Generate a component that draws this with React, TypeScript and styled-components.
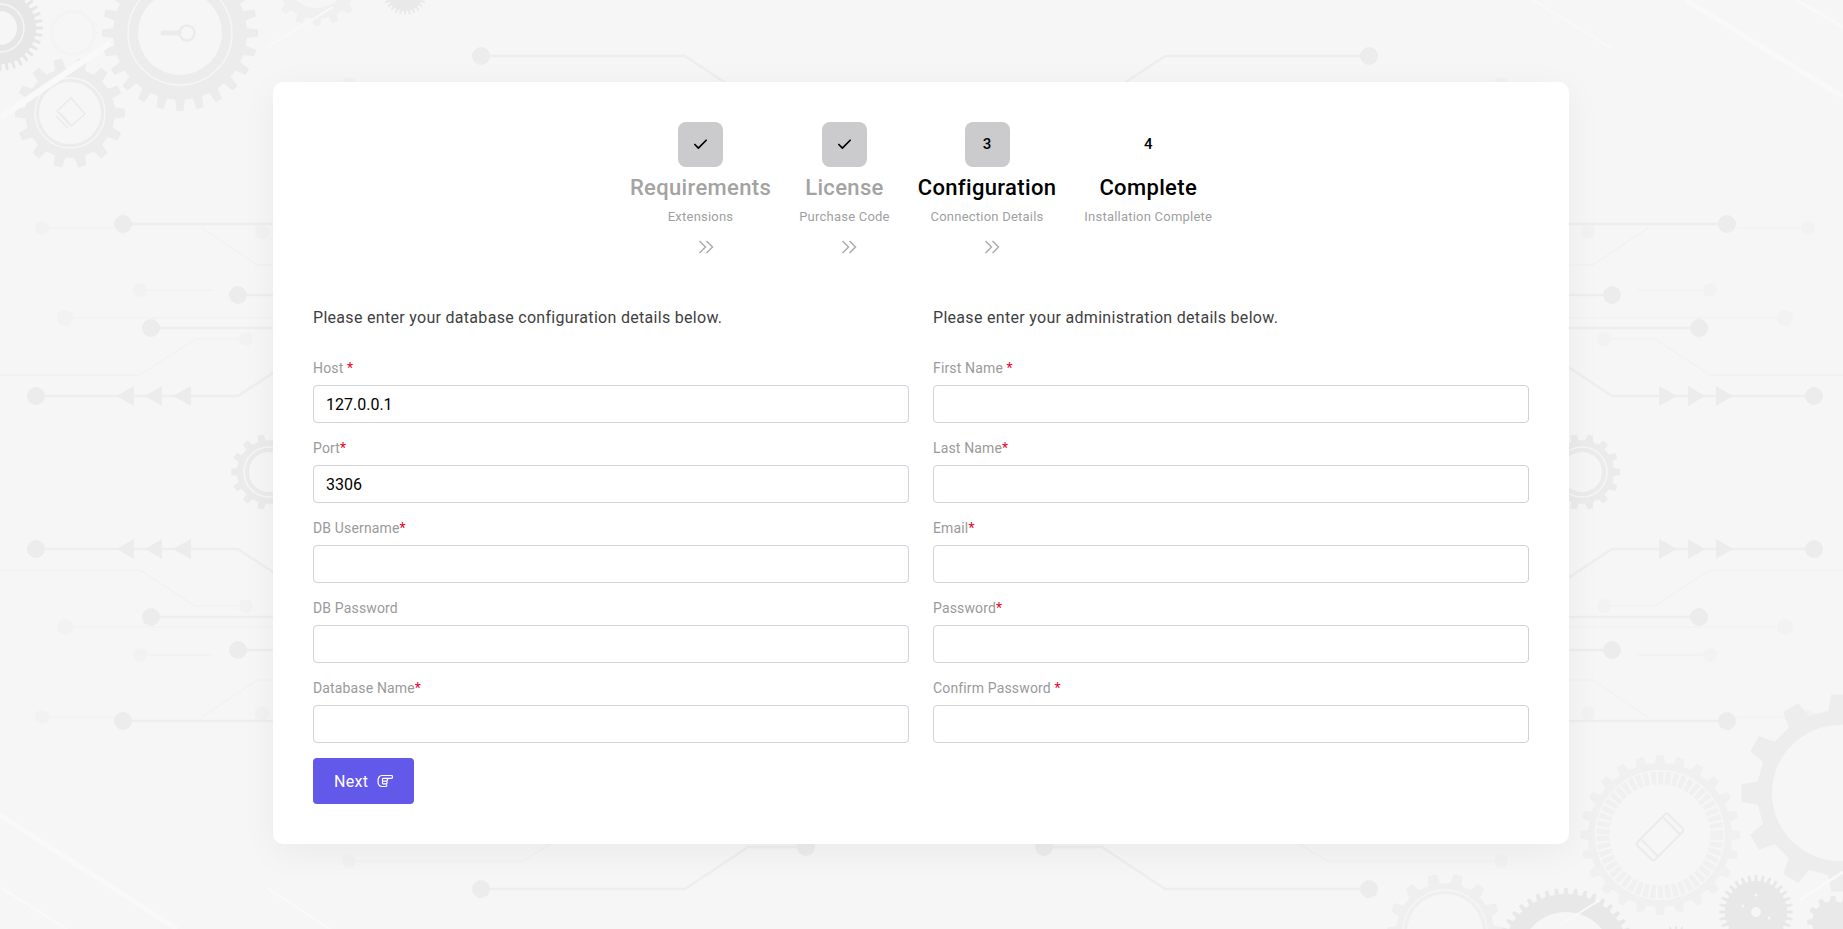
import { createGlobalStyle, styled } from 'styled-components';
import { Check } from 'lucide-react';

const FONT = 'Roboto, "Liberation Sans", sans-serif';

const GlobalStyle = createGlobalStyle`
  * {
    box-sizing: border-box;
  }
  html, body {
    margin: 0;
    padding: 0;
    background: #f6f6f6;
    font-family: ${FONT};
  }
`;

type StepData = { label: string; hint: string; mark: 'done' | number; status: 'done' | 'active' | 'todo' };

const STEPS: StepData[] = [
  { label: 'Requirements', hint: 'Extensions', mark: 'done', status: 'done' },
  { label: 'License', hint: 'Purchase Code', mark: 'done', status: 'done' },
  { label: 'Configuration', hint: 'Connection Details', mark: 3, status: 'active' },
  { label: 'Complete', hint: 'Installation Complete', mark: 4, status: 'todo' },
];

type FieldData = { label: string; required?: 'spaced' | 'tight'; value?: string };

const DB_FIELDS: FieldData[] = [
  { label: 'Host', required: 'spaced', value: '127.0.0.1' },
  { label: 'Port', required: 'tight', value: '3306' },
  { label: 'DB Username', required: 'tight' },
  { label: 'DB Password' },
  { label: 'Database Name', required: 'tight' },
];

const ADMIN_FIELDS: FieldData[] = [
  { label: 'First Name', required: 'spaced' },
  { label: 'Last Name', required: 'tight' },
  { label: 'Email', required: 'tight' },
  { label: 'Password', required: 'tight' },
  { label: 'Confirm Password', required: 'spaced' },
];

function gearPath(cx: number, cy: number, outer: number, root: number, teeth: number, hole: number) {
  const step = (Math.PI * 2) / teeth;
  const pt = (r: number, a: number) =>
    `${(cx + r * Math.cos(a)).toFixed(1)} ${(cy + r * Math.sin(a)).toFixed(1)}`;
  let d = '';
  for (let i = 0; i < teeth; i++) {
    const a = i * step;
    d += `${i === 0 ? 'M' : 'L'}${pt(root, a - step * 0.27)}L${pt(outer, a - step * 0.17)}L${pt(outer, a + step * 0.17)}L${pt(root, a + step * 0.27)}`;
  }
  d += 'Z';
  if (hole > 0) {
    d += `M${cx - hole} ${cy}a${hole} ${hole} 0 1 0 ${hole * 2} 0a${hole} ${hole} 0 1 0 ${-hole * 2} 0Z`;
  }
  return d;
}

type GearProps = {
  cx: number;
  cy: number;
  outer: number;
  root: number;
  teeth: number;
  hole: number;
  fill?: string;
  ring?: number;
};

function Gear({ cx, cy, outer, root, teeth, hole, fill = '#ececec', ring }: GearProps) {
  return (
    <g>
      <path d={gearPath(cx, cy, outer, root, teeth, hole)} fill={fill} fillRule="evenodd" />
      {ring && <circle cx={cx} cy={cy} r={ring} fill="none" stroke="#f6f6f6" strokeWidth={1.5} />}
    </g>
  );
}

function Circuits() {
  const strong = { stroke: '#eeeeee', strokeWidth: 2.5, fill: 'none' };
  const faint = { stroke: '#f2f2f2', strokeWidth: 1.5, fill: 'none' };
  return (
    <g>
      <path d="M123 224H300M238 295H300M151 328H300M36 396H238L300 355" {...strong} />
      <path d="M481 56H685L748 98H806" {...strong} />
      <g fill="#ececec">
        <circle cx={123} cy={224} r={9} />
        <circle cx={238} cy={295} r={9} />
        <circle cx={151} cy={328} r={9} />
        <circle cx={36} cy={396} r={9} />
        <circle cx={481} cy={56} r={9} />
        <circle cx={806} cy={98} r={9} />
        <path d="M117 396L134 386V406ZM145 396L162 386V406ZM173 396L191 386V406Z" />
      </g>
      <path
        d="M42 228H113M202 228L257 265H300M140 290H213M65 318H300M0 375H140L195 339H245M349 84H523L552 102"
        {...faint}
      />
      <g fill="#f2f2f2">
        <circle cx={42} cy={228} r={7} />
        <circle cx={262} cy={232} r={7} />
        <circle cx={140} cy={290} r={7} />
        <circle cx={65} cy={318} r={8} />
        <circle cx={246} cy={339} r={7} />
        <circle cx={349} cy={84} r={7} />
      </g>
    </g>
  );
}

function Backdrop() {
  return (
    <BackdropSvg viewBox="0 0 1843 929" preserveAspectRatio="xMinYMin slice">
      <Circuits />
      <g transform="translate(1850,0) scale(-1,1)">
        <Circuits />
      </g>
      <g transform="translate(0,945) scale(1,-1)">
        <Circuits />
      </g>
      <g transform="translate(1850,945) scale(-1,-1)">
        <Circuits />
      </g>

      {/* gears top left */}
      <Gear cx={317} cy={-22} outer={48} root={41} teeth={16} hole={30} fill="#f0f0f0" />
      <Gear cx={405} cy={-7} outer={22} root={18} teeth={28} hole={0} fill="#e9e9e9" />
      <Gear cx={73} cy={33} outer={24} root={22} teeth={30} hole={20} fill="#f3f3f3" />
      <Gear cx={0} cy={28} outer={43} root={36} teeth={36} hole={17} ring={24} fill="#e6e6e6" />
      <Gear cx={180} cy={33} outer={78} root={67} teeth={24} hole={42} ring={52} />
      <circle cx={187} cy={33} r={7.5} fill="none" stroke="#ebebeb" strokeWidth={2.5} />
      <path d="M163 33H179" stroke="#ebebeb" strokeWidth={5} strokeLinecap="round" />
      <Gear cx={70} cy={113} outer={55} root={45} teeth={14} hole={31} ring={35} />
      <path
        d="M57 111L71 98L85 114L71 126ZM56 116L68 128M60 113L70 124"
        fill="none"
        stroke="#ebebeb"
        strokeWidth={1.6}
      />

      {/* gears half hidden by the card */}
      <Gear cx={269} cy={472} outer={38} root={32} teeth={14} hole={20} ring={25} fill="#ebebeb" />
      <Gear cx={1582} cy={472} outer={38} root={32} teeth={14} hole={20} ring={25} fill="#ebebeb" />

      {/* gears bottom right */}
      <Gear cx={1445} cy={932} outer={58} root={49} teeth={14} hole={38} ring={42} fill="#efefef" />
      <Gear cx={1566} cy={958} outer={70} root={64} teeth={44} hole={46} fill="#e8e8e8" />
      <Gear cx={1660} cy={835} outer={80} root={72} teeth={24} hole={65} fill="#f0f0f0" />
      <circle
        cx={1660}
        cy={835}
        r={57}
        fill="none"
        stroke="#f0f0f0"
        strokeWidth={13}
        strokeDasharray="5 2.2"
      />
      <g transform="rotate(45 1660 837)" fill="none" stroke="#ebebeb" strokeWidth={2}>
        <rect x={1647.5} y={815} width={25} height={44} rx={3} />
        <path d="M1647.5 821H1672.5M1647.5 852H1672.5" />
      </g>
      <Gear cx={1676} cy={950} outer={24} root={20} teeth={24} hole={0} fill="#e9e9e9" />
      <Gear cx={1756} cy={912} outer={37} root={31} teeth={32} hole={0} fill="#e8e8e8" />
      <circle cx={1756} cy={912} r={5} fill="#f6f6f6" />
      <circle cx={1743} cy={906} r={1.5} fill="#f6f6f6" />
      <circle cx={1769} cy={918} r={1.5} fill="#f6f6f6" />
      <circle cx={1756} cy={895} r={1.5} fill="#f6f6f6" />
      <Gear cx={1833} cy={922} outer={26} root={21} teeth={12} hole={0} fill="#e9e9e9" />
      <Gear cx={1840} cy={793} outer={99} root={83} teeth={12} hole={68} fill="#ededed" />

      {/* light streaks */}
      <g stroke="#f9f9f9" fill="none">
        <path d="M1686 0L1843 97" strokeWidth={5} />
        <path d="M1533 0L1611 48" strokeWidth={2} />
        <path d="M1796 0L1843 27" strokeWidth={3} />
        <path d="M0 815L177 929" strokeWidth={5} />
        <path d="M0 887L67 929" strokeWidth={2.5} />
        <path d="M267 888L330 929" strokeWidth={2.5} />
        <path d="M0 118L110 43" strokeWidth={6} />
        <path d="M267 47L333 7" strokeWidth={2} />
        <path d="M1800 900L1843 872" strokeWidth={3} />
        <path d="M1560 925L1600 900" strokeWidth={2} />
      </g>
    </BackdropSvg>
  );
}

function Stepper() {
  return (
    <Steps>
      {STEPS.map((step, i) => (
        <Step key={step.label}>
          <StepMark $plain={step.status === 'todo'}>
            {step.mark === 'done' ? <Check size={17} strokeWidth={2.4} /> : <StepNumber>{step.mark}</StepNumber>}
          </StepMark>
          <StepTitle $muted={step.status === 'done'}>{step.label}</StepTitle>
          <StepHint>{step.hint}</StepHint>
          {i < STEPS.length - 1 && (
            <StepArrow viewBox="0 0 16 16">
              <path d="M1.5 2L7.5 8L1.5 14M8.5 2L14.5 8L8.5 14" />
            </StepArrow>
          )}
        </Step>
      ))}
    </Steps>
  );
}

function Field({ label, required, value }: FieldData) {
  return (
    <FieldRow>
      <FieldLabel>
        {label}
        {required === 'spaced' && ' '}
        {required && <Required>*</Required>}
      </FieldLabel>
      <TextInput type="text" defaultValue={value} />
    </FieldRow>
  );
}

export default function App() {
  return (
    <Page>
      <GlobalStyle />
      <Backdrop />
      <Card>
        <Stepper />
        <Columns>
          <div>
            <Intro>Please enter your database configuration details below.</Intro>
            {DB_FIELDS.map((field) => (
              <Field key={field.label} {...field} />
            ))}
          </div>
          <div>
            <Intro>Please enter your administration details below.</Intro>
            {ADMIN_FIELDS.map((field) => (
              <Field key={field.label} {...field} />
            ))}
          </div>
        </Columns>
        <NextButton type="button">
          Next
          <HandIcon viewBox="0 0 16 14">
            <path d="M5 1.5H14.2a1.4 1.4 0 0 1 0 2.8H5.5M5 1.5C2.5 1.5 1 4 1 7s1.5 5.5 4 5.5H8.5a1.35 1.35 0 0 0 0-2.7H5.5M8.8 9.8a1.35 1.35 0 0 0 0-2.7H5.5M9.2 7.1a1.4 1.4 0 0 0 0-2.8M5.5 4.3V9.8" />
          </HandIcon>
        </NextButton>
      </Card>
    </Page>
  );
}

const Page = styled.div`
  position: relative;
  min-height: 100vh;
  overflow: hidden;
  display: flex;
  justify-content: center;
  align-items: flex-start;
  padding: 82px 1px 0 0;
  background: #f6f6f6;
`;

const BackdropSvg = styled.svg`
  position: absolute;
  inset: 0;
  width: 100%;
  height: 100%;
`;

const Card = styled.div`
  position: relative;
  width: 1296px;
  padding: 40px;
  background: #ffffff;
  border-radius: 10px;
  box-shadow: 0 8px 36px rgba(0, 0, 0, 0.05);
`;

const Steps = styled.div`
  display: flex;
  justify-content: center;
  gap: 28px;
  margin-bottom: 49px;
`;

const Step = styled.div`
  display: flex;
  flex-direction: column;
  align-items: center;
`;

const StepMark = styled.div<{ $plain: boolean }>`
  width: 45px;
  height: 45px;
  display: flex;
  align-items: center;
  justify-content: center;
  border-radius: 8px;
  background: ${(p) => (p.$plain ? 'transparent' : '#cbcbcd')};
  color: #000000;
`;

const StepNumber = styled.span`
  margin-top: -2px;
  font-size: 15px;
  font-weight: 500;
`;

const StepTitle = styled.div<{ $muted: boolean }>`
  margin-top: 9px;
  font-size: 22px;
  line-height: 24px;
  font-weight: 500;
  letter-spacing: 0.35px;
  white-space: nowrap;
  color: ${(p) => (p.$muted ? '#a3a3a3' : '#000000')};
`;

const StepHint = styled.div`
  margin-top: 7px;
  font-size: 13px;
  line-height: 20px;
  letter-spacing: 0.22px;
  white-space: nowrap;
  color: #9f9f9f;
`;

const StepArrow = styled.svg`
  width: 16px;
  height: 16px;
  margin: 12px 0 2px 10px;
  fill: none;
  stroke: #acacac;
  stroke-width: 1.5;
`;

const Columns = styled.div`
  display: grid;
  grid-template-columns: 596px 596px;
  gap: 24px;
`;

const Intro = styled.p`
  margin: 0 0 28px;
  font-size: 16px;
  line-height: 24px;
  letter-spacing: 0.3px;
  color: #3f3f3f;
`;

const FieldRow = styled.div`
  margin-bottom: 15px;
`;

const FieldLabel = styled.label`
  display: block;
  margin-bottom: 6px;
  font-size: 14px;
  line-height: 21px;
  letter-spacing: 0.15px;
  color: #9a9a9a;
`;

const Required = styled.span`
  color: #f1001f;
`;

const TextInput = styled.input`
  display: block;
  width: 100%;
  height: 38px;
  padding: 0 12px;
  border: 1px solid #ced4da;
  border-radius: 4px;
  background: #ffffff;
  font-family: ${FONT};
  font-size: 16px;
  color: #000000;
  outline: none;
`;

const NextButton = styled.button`
  display: flex;
  align-items: center;
  gap: 9px;
  height: 46px;
  padding: 0 21px;
  border: none;
  border-radius: 4px;
  background: #6259ea;
  font-family: ${FONT};
  font-size: 16px;
  letter-spacing: 0.3px;
  color: #ffffff;
`;

const HandIcon = styled.svg`
  width: 16px;
  height: 14px;
  fill: none;
  stroke: #ffffff;
  stroke-width: 1.2;
`;
